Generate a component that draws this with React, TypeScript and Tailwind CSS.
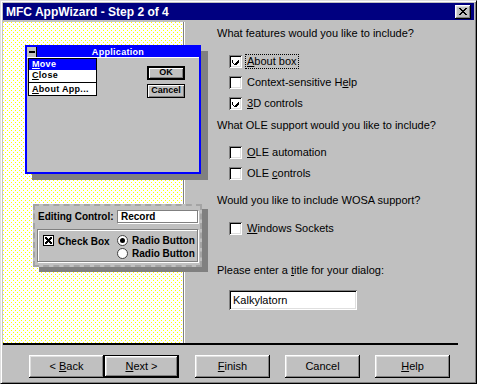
import React from 'react';

const raised =
  'bg-[#c0c0c0] shadow-[inset_-1px_-1px_#000,inset_1px_1px_#fff,inset_-2px_-2px_#808080,inset_2px_2px_#dfdfdf]';
const sunken =
  'bg-white shadow-[inset_1px_1px_#808080,inset_-1px_-1px_#fff,inset_2px_2px_#000,inset_-2px_-2px_#dfdfdf]';

const Check: React.FC = () => (
  <svg width="7" height="7" viewBox="0 0 7 7" shapeRendering="crispEdges">
    <path d="M0 2h1v3h1v1h1v-1h1v-1h1v-1h1v-1h1v3h-1v1h-1v1h-1v1h-1v-1h-1v-1h-1v-1h-1z" fill="#000" />
  </svg>
);

const CheckRow: React.FC<{ checked?: boolean; children: React.ReactNode; focus?: boolean }> = ({
  checked,
  children,
  focus,
}) => (
  <div className="flex items-center h-[21px] ml-[12px]">
    <div className={`w-[13px] h-[13px] flex items-center justify-center ${sunken}`}>{checked && <Check />}</div>
    <span className={`ml-[4px] px-[1px] leading-[13px] ${focus ? 'outline outline-1 outline-dotted outline-black' : ''}`}>
      {children}
    </span>
  </div>
);

const WinButton: React.FC<{ children: React.ReactNode; isDefault?: boolean }> = ({ children, isDefault }) => (
  <div className={isDefault ? 'border border-black' : ''}>
    <div
      className={`${isDefault ? 'w-[73px] h-[21px]' : 'w-[75px] h-[23px]'} flex items-center justify-center ${raised}`}
    >
      {children}
    </div>
  </div>
);

const MiniButton: React.FC<{ children: React.ReactNode; thick?: boolean }> = ({ children, thick }) => (
  <div
    className={`w-[38px] h-[14px] flex items-center justify-center bg-[#c0c0c0] ${
      thick ? 'border-2' : 'border'
    } border-black shadow-[inset_1px_1px_#fff,inset_-1px_-1px_#808080]`}
  >
    {children}
  </div>
);

export default function App() {
  return (
    <div
      className="w-[477px] h-[384px] bg-[#c0c0c0] border border-t-[#dfdfdf] border-l-[#dfdfdf] border-r-black border-b-black shadow-[inset_1px_1px_#fff,inset_-1px_-1px_#808080] p-[2px] flex flex-col overflow-hidden text-black"
      style={{ fontFamily: '"Liberation Sans", Arial, sans-serif' }}
    >
      {/* title bar */}
      <div className="h-[17px] bg-[#000080] flex items-center pl-[3px] pr-[3px]">
        <span className="text-white text-[12px] font-bold leading-none">MFC AppWizard - Step 2 of 4</span>
        <div className={`ml-auto w-[16px] h-[14px] flex items-center justify-center ${raised}`}>
          <svg width="8" height="7" viewBox="0 0 8 7" shapeRendering="crispEdges">
            <path d="M0 0h2v1h1v1h2v-1h1v-1h2v1h-1v1h-1v1h-1v1h1v1h1v1h1v1h-2v-1h-1v-1h-2v1h-1v1h-2v-1h1v-1h1v-1h1v-1h-1v-1h-1v-1h-1z" fill="#000" />
          </svg>
        </div>
      </div>

      <div className="flex mt-[2px] h-[321px]">
        {/* illustration panel */}
        <div className="relative w-[181px] shrink-0 bg-white bg-[image:conic-gradient(at_1px_1px,transparent_75%,#ffff00_0),conic-gradient(at_1px_1px,transparent_75%,#ffff00_0)] bg-[length:4px_4px] bg-[position:0_0,2px_2px] border-r border-[#808080] shadow-[1px_0_#fff] flex flex-col">
          {/* mock application window */}
          <div className="relative z-10 ml-[22px] mt-[23px] w-[176px] h-[129px] border-2 border-[#0000ff] bg-[#c0c0c0] shadow-[7px_6px_0_#808080] flex flex-col">
            <div className="h-[11px] bg-[#0000ff] flex items-center border-b border-white">
              <div className="w-[10px] h-[10px] bg-[#c0c0c0] border-r border-black flex items-center justify-center">
                <div className="w-[6px] h-[2px] bg-white border border-black" />
              </div>
              <span className="flex-1 text-center text-white text-[9px] font-bold leading-none tracking-[0.3px]">
                Application
              </span>
            </div>
            <div className="flex flex-col items-end pr-[14px] pt-[8px] gap-[4px]">
              <MiniButton thick>
                <span className="text-[9px] font-bold">OK</span>
              </MiniButton>
              <MiniButton>
                <span className="text-[9px] font-bold">Cancel</span>
              </MiniButton>
            </div>
            {/* system menu dropped down */}
            <div className="absolute left-[1px] top-[11px] w-[69px] bg-white border border-black text-[9px] font-bold leading-none">
              <div className="h-[11px] bg-[#0000ff] text-white flex items-center px-[3px] tracking-[0.3px]">
                <span className="underline">M</span>ove
              </div>
              <div className="h-[11px] flex items-center px-[3px] tracking-[0.3px]">
                <span className="underline">C</span>lose
              </div>
              <div className="h-px bg-black my-[1px]" />
              <div className="h-[11px] flex items-center px-[3px] tracking-[0.3px]">
                <span className="underline">A</span>bout App...
              </div>
            </div>
          </div>

          {/* editing control sample */}
          <div className="relative z-10 ml-[30px] mt-[30px] w-[169px] h-[63px] bg-[#c0c0c0] border-2 border-dashed border-[#a4a4a4] shadow-[6px_5px_0_#808080] px-[2px] pt-[4px] text-[10px] font-bold leading-none">
            <div className="flex items-center h-[13px]">
              <span className="ml-[1px]">Editing Control:</span>
              <div className="ml-auto w-[81px] h-[13px] bg-white border border-[#808080] shadow-[1px_1px_#fff] flex items-center pl-[3px]">
                Record
              </div>
            </div>
            <div className="mt-[6px] h-[33px] border border-[#808080] shadow-[inset_1px_1px_#fff,1px_1px_#fff] flex pl-[5px] pt-[5px]">
              <div className="w-[74px] flex items-start">
                <div className="w-[11px] h-[11px] bg-white border border-black flex items-center justify-center">
                  <svg width="7" height="7" viewBox="0 0 7 7" shapeRendering="crispEdges">
                    <path d="M0 0h2v1h1v1h1v-1h1v-1h2v2h-1v1h-1v1h1v1h1v2h-2v-1h-1v-1h-1v1h-1v1h-2v-2h1v-1h1v-1h-1v-1h-1z" fill="#000" />
                  </svg>
                </div>
                <span className="ml-[4px] mt-[2px]">Check Box</span>
              </div>
              <div className="flex flex-col gap-[2px]">
                <div className="flex items-center h-[11px]">
                  <div className="w-[11px] h-[11px] rounded-full bg-white border border-[#404040] flex items-center justify-center">
                    <div className="w-[5px] h-[5px] rounded-full bg-black" />
                  </div>
                  <span className="ml-[4px]">Radio Button</span>
                </div>
                <div className="flex items-center h-[11px]">
                  <div className="w-[11px] h-[11px] rounded-full bg-white border border-[#404040]" />
                  <span className="ml-[4px]">Radio Button</span>
                </div>
              </div>
            </div>
          </div>
        </div>

        {/* options */}
        <div className="flex-1 pl-[33px] text-[11px] leading-[13px]">
          <div className="mt-[5px] h-[13px]">What features would you like to include?</div>
          <div className="mt-[11px]">
            <CheckRow checked focus>
              <span className="underline">A</span>bout box
            </CheckRow>
            <CheckRow>
              Context-sensitive H<span className="underline">e</span>lp
            </CheckRow>
            <CheckRow checked>
              <span className="underline">3</span>D controls
            </CheckRow>
          </div>
          <div className="mt-[5px] h-[13px]">What OLE support would you like to include?</div>
          <div className="mt-[10px]">
            <CheckRow>
              <span className="underline">O</span>LE automation
            </CheckRow>
            <CheckRow>
              OLE <span className="underline">c</span>ontrols
            </CheckRow>
          </div>
          <div className="mt-[10px] h-[13px]">Would you like to include WOSA support?</div>
          <div className="mt-[11px]">
            <CheckRow>
              <span className="underline">W</span>indows Sockets
            </CheckRow>
          </div>
          <div className="mt-[25px] h-[13px]">
            Please enter a <span className="underline">t</span>itle for your dialog:
          </div>
          <div className={`mt-[13px] ml-[12px] w-[128px] h-[20px] flex items-center pl-[4px] ${sunken}`}>
            Kalkylatorn
          </div>
        </div>
      </div>

      {/* separator and buttons */}
      <div className="h-[2px] w-[455px] bg-black" />
      <div className="flex mt-[10px] pl-[26px] text-[11px]">
        <WinButton>
          &lt; <span className="underline ml-[3px]">B</span>ack
        </WinButton>
        <WinButton isDefault>
          <span className="underline">N</span>ext &gt;
        </WinButton>
        <div className="ml-[16px]">
          <WinButton>
            <span className="underline">F</span>inish
          </WinButton>
        </div>
        <div className="ml-[15px]">
          <WinButton>Cancel</WinButton>
        </div>
        <div className="ml-[15px]">
          <WinButton>
            <span className="underline">H</span>elp
          </WinButton>
        </div>
      </div>
    </div>
  );
}
